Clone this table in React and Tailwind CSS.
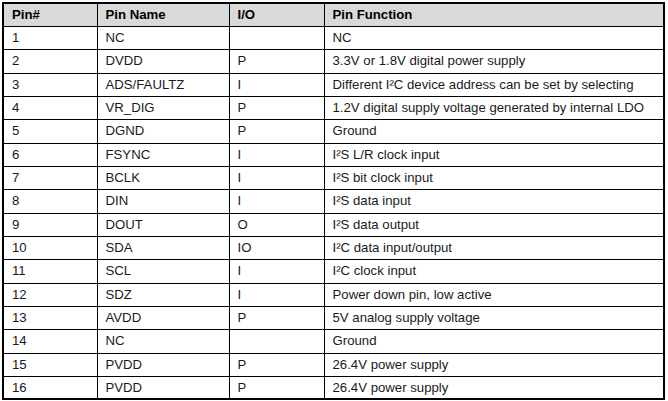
const rows = [
  ['1', 'NC', '', 'NC'],
  ['2', 'DVDD', 'P', '3.3V or 1.8V digital power supply'],
  ['3', 'ADS/FAULTZ', 'I', 'Different I²C device address can be set by selecting'],
  ['4', 'VR_DIG', 'P', '1.2V digital supply voltage generated by internal LDO'],
  ['5', 'DGND', 'P', 'Ground'],
  ['6', 'FSYNC', 'I', 'I²S L/R clock input'],
  ['7', 'BCLK', 'I', 'I²S bit clock input'],
  ['8', 'DIN', 'I', 'I²S data input'],
  ['9', 'DOUT', 'O', 'I²S data output'],
  ['10', 'SDA', 'IO', 'I²C data input/output'],
  ['11', 'SCL', 'I', 'I²C clock input'],
  ['12', 'SDZ', 'I', 'Power down pin, low active'],
  ['13', 'AVDD', 'P', '5V analog supply voltage'],
  ['14', 'NC', '', 'Ground'],
  ['15', 'PVDD', 'P', '26.4V power supply'],
  ['16', 'PVDD', 'P', '26.4V power supply'],
];

const heights = [23, 24, 23, 23, 24, 23, 23, 24, 23, 23, 24, 23, 23, 24, 23, 23];

export default function App() {
  return (
    <div className="w-[668px] h-[401px] bg-white pt-[2px] pl-[2px]" style={{ fontFamily: '"Liberation Sans", Arial, sans-serif' }}>
      <table className="border-collapse border-2 border-black text-[13.2px] text-[#1a1a1a] table-fixed w-[663px]">
        <colgroup>
          <col className="w-[94px]" />
          <col className="w-[132px]" />
          <col className="w-[95px]" />
          <col />
        </colgroup>
        <thead>
          <tr className="h-[23px] bg-[#d9d9d9] text-left text-black">
            <th className="border border-black pl-[8px] font-bold">Pin#</th>
            <th className="border border-black pl-[8px] font-bold">Pin Name</th>
            <th className="border border-black pl-[8px] font-bold">I/O</th>
            <th className="border border-black pl-[8px] font-bold">Pin Function</th>
          </tr>
        </thead>
        <tbody>
          {rows.map((r, i) => (
            <tr key={r[0]} style={{ height: heights[i] }}>
              {r.map((c, j) => (
                <td key={j} className="border border-black pl-[8px] leading-none whitespace-nowrap">{c}</td>
              ))}
            </tr>
          ))}
        </tbody>
      </table>
    </div>
  );
}
